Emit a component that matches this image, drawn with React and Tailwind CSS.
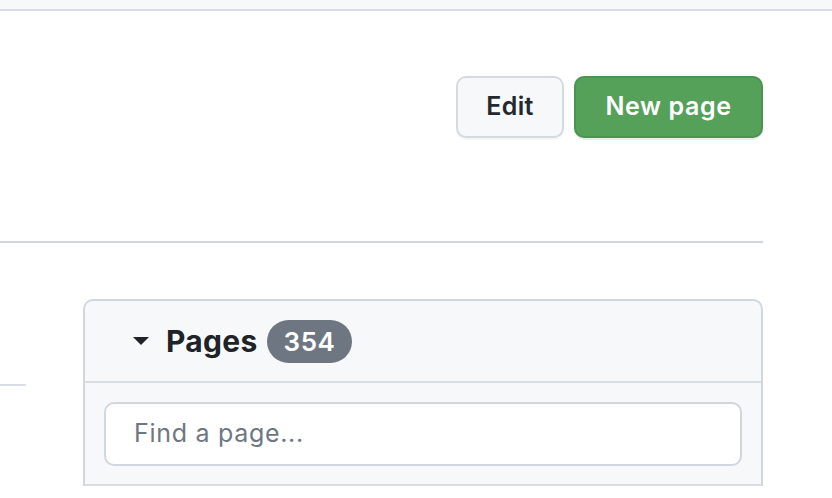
import React from "react";

const App = () => {
  return (
    <div className="w-[832px] h-[498px] overflow-hidden bg-white font-['Inter',sans-serif] text-[#1f2328]">
      <div className="h-[11px] bg-[#f6f8fa] border-b-2 border-[#d8dee4]" />

      <div className="pr-[69px]">
        <div className="flex justify-end gap-[10px] pt-[65px]">
          <button className="h-[62px] w-[108px] rounded-[10px] border-2 border-[#d5dae0] bg-[#f6f8fa] text-[25px] font-semibold tracking-[0.4px] text-[#24292f] shadow-[0_2px_0_rgba(31,35,40,0.04)]">
            Edit
          </button>
          <button className="h-[62px] w-[189px] rounded-[10px] border-2 border-[#4a9350] bg-[#55a15a] text-[25px] font-semibold tracking-[0.6px] text-white shadow-[0_2px_0_rgba(31,35,40,0.08)]">
            New page
          </button>
        </div>

        <div className="mt-[103px] h-[2px] bg-[#d0d7de]" />

        <div className="flex pt-[56px]">
          <div className="w-[26px] shrink-0 pt-[85px]">
            <div className="h-[2px] bg-[#d8dee4]" />
          </div>

          <div className="ml-[57px] flex-1 rounded-t-[10px] border-2 border-b-0 border-[#d0d7de] bg-[#f6f8fa]">
            <div className="flex h-[82px] items-center border-b-2 border-[#d8dee4] pl-[47px]">
              <svg width="18" height="10" viewBox="0 0 18 10" className="mr-[16px]">
                <path d="M1 1h16L9 9z" fill="#1f2328" />
              </svg>
              <span className="text-[30px] font-bold tracking-[0.3px] text-[#1f2328]">Pages</span>
              <span className="ml-[9px] flex h-[43px] items-center rounded-full bg-[#6e7781] px-[17px] text-[26px] font-semibold tracking-[0.5px] text-white">
                354
              </span>
            </div>
            <div className="border-b-2 border-[#d8dee4] px-[19px] pt-[19px] pb-[18px]">
              <div className="flex h-[64px] items-center rounded-[10px] border-2 border-[#d0d7de] bg-white pl-[28px] text-[25px] tracking-[0.7px] text-[#6e7781]">
                Find a page...
              </div>
            </div>
          </div>
        </div>
      </div>
    </div>
  );
};

export default App;
